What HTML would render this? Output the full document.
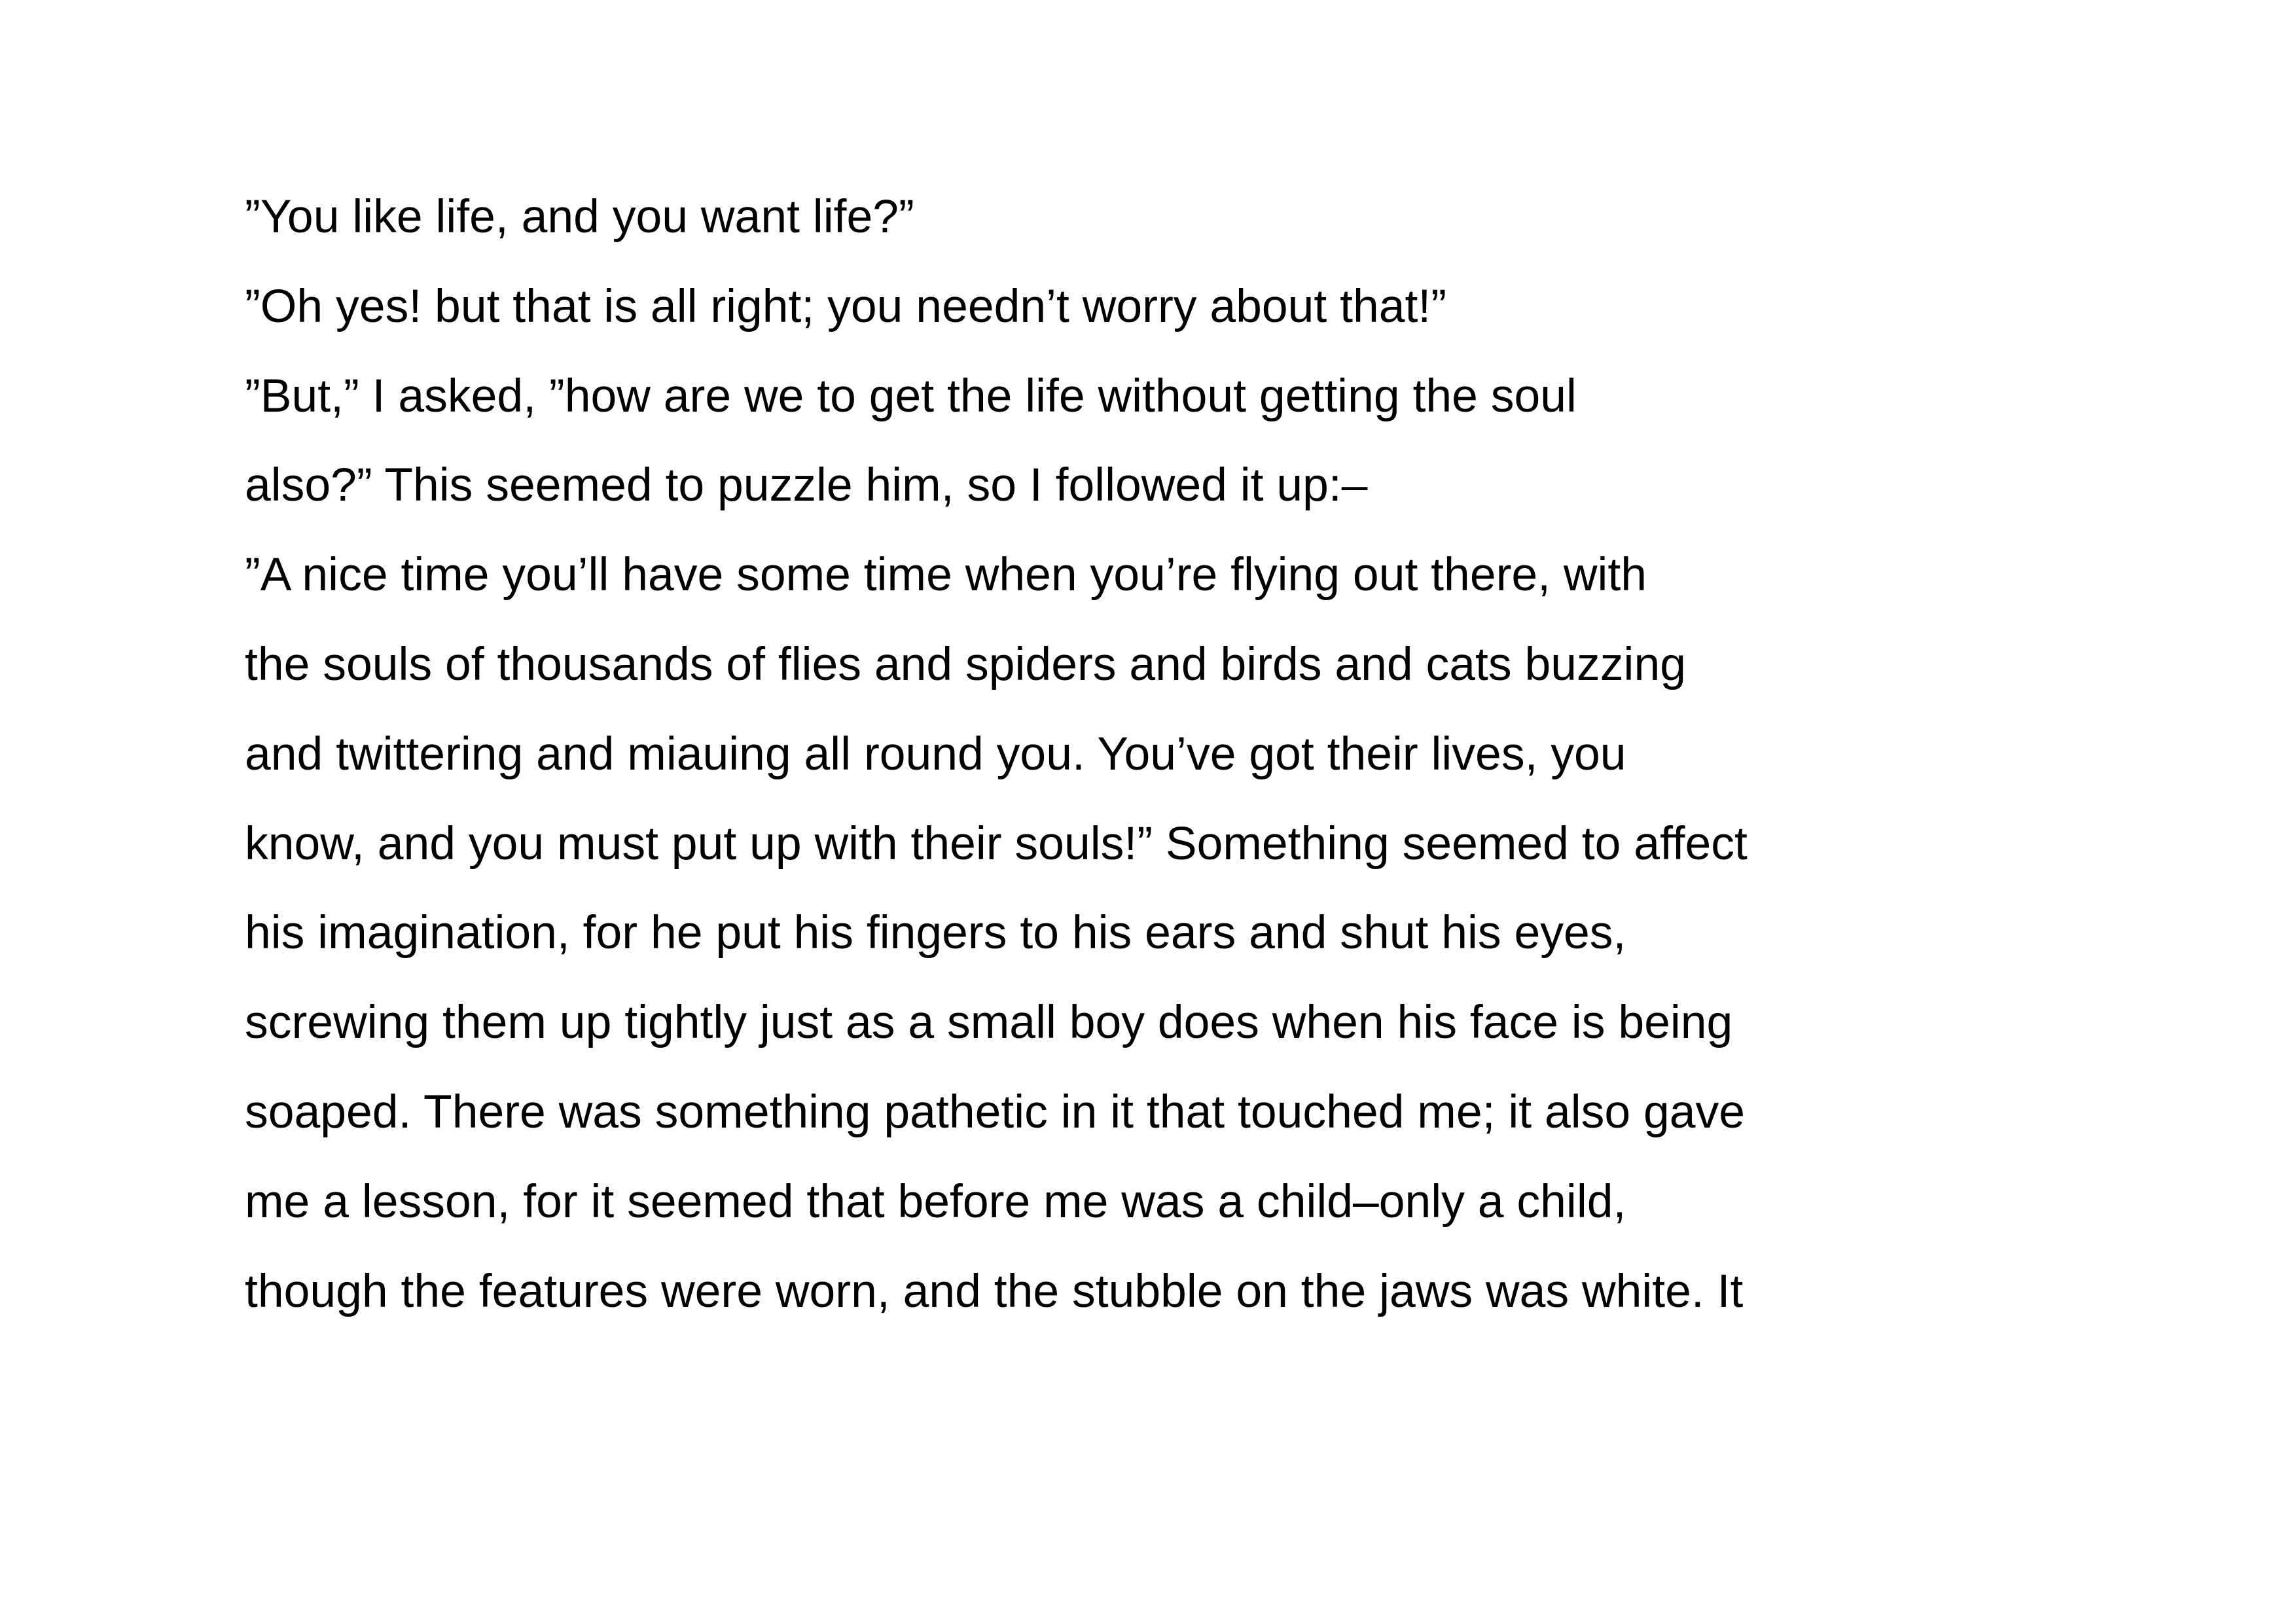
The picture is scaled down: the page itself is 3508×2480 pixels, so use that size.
<!DOCTYPE html>
<html><head><meta charset="utf-8"><style>
html,body{margin:0;padding:0;background:#fff;}
body{width:3508px;height:2480px;position:relative;overflow:hidden;font-family:"Liberation Sans",Arial,sans-serif;font-size:71.5px;color:#000;}
.l{position:absolute;left:374px;line-height:136.8px;height:136.8px;white-space:nowrap;}
</style></head><body>
<div class="l" style="top:263px">”You like life, and you want life?”</div>
<div class="l" style="top:399.8px">”Oh yes! but that is all right; you needn’t worry about that!”</div>
<div class="l" style="top:536.6px">”But,” I asked, ”how are we to get the life without getting the soul</div>
<div class="l" style="top:673.4px">also?” This seemed to puzzle him, so I followed it up:–</div>
<div class="l" style="top:810.2px">”A nice time you’ll have some time when you’re flying out there, with</div>
<div class="l" style="top:947px">the souls of thousands of flies and spiders and birds and cats buzzing</div>
<div class="l" style="top:1083.8px">and twittering and miauing all round you. You’ve got their lives, you</div>
<div class="l" style="top:1220.6px">know, and you must put up with their souls!” Something seemed to affect</div>
<div class="l" style="top:1357.4px">his imagination, for he put his fingers to his ears and shut his eyes,</div>
<div class="l" style="top:1494.2px">screwing them up tightly just as a small boy does when his face is being</div>
<div class="l" style="top:1631px">soaped. There was something pathetic in it that touched me; it also gave</div>
<div class="l" style="top:1767.8px">me a lesson, for it seemed that before me was a child–only a child,</div>
<div class="l" style="top:1904.6px">though the features were worn, and the stubble on the jaws was white. It</div>
</body></html>
